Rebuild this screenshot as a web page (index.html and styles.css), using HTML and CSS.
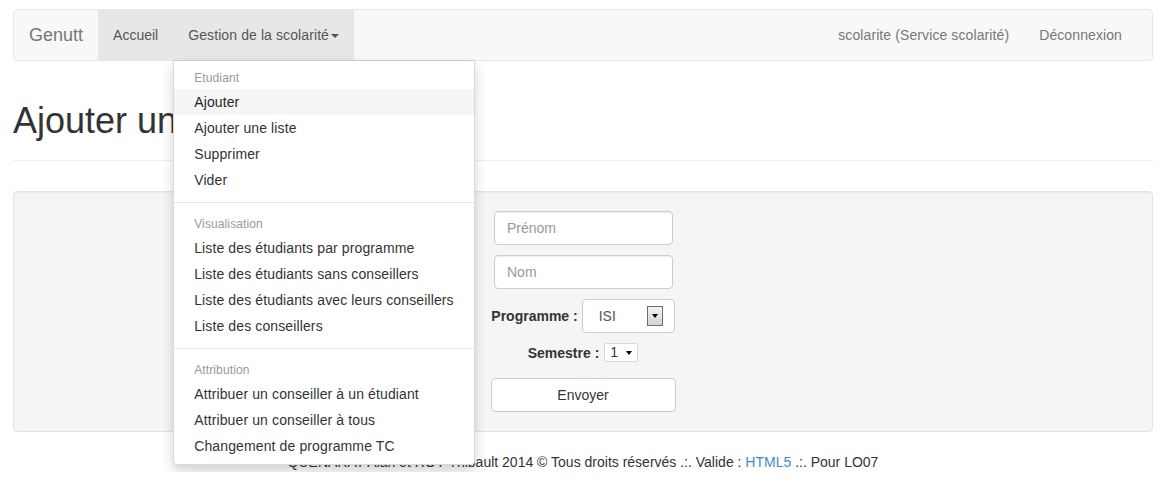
FILE: index.html
```html
<!DOCTYPE html>
<html lang="fr">
<head>
<meta charset="utf-8">
<title>Genutt - Ajouter un étudiant</title>
<link rel="stylesheet" href="styles.css">
</head>
<body>
<div class="page">
  <nav class="navbar">
    <div class="nav-left">
      <a class="brand" href="#">Genutt</a>
      <ul class="nav">
        <li class="active"><a href="#">Accueil</a></li>
        <li class="dropdown open">
          <a href="#">Gestion de la scolarité<span class="caret"></span></a>
          <ul class="dropdown-menu">
            <li class="dropdown-header">Etudiant</li>
            <li class="hover"><a href="#">Ajouter</a></li>
            <li><a href="#">Ajouter une liste</a></li>
            <li><a href="#">Supprimer</a></li>
            <li><a href="#">Vider</a></li>
            <li class="divider"></li>
            <li class="dropdown-header">Visualisation</li>
            <li><a href="#">Liste des étudiants par programme</a></li>
            <li><a href="#">Liste des étudiants sans conseillers</a></li>
            <li><a href="#">Liste des étudiants avec leurs conseillers</a></li>
            <li><a href="#">Liste des conseillers</a></li>
            <li class="divider"></li>
            <li class="dropdown-header">Attribution</li>
            <li><a href="#">Attribuer un conseiller à un étudiant</a></li>
            <li><a href="#">Attribuer un conseiller à tous</a></li>
            <li><a href="#">Changement de programme TC</a></li>
          </ul>
        </li>
      </ul>
    </div>
    <ul class="nav">
      <li><a href="#">scolarite (Service scolarité)</a></li>
      <li><a href="#">Déconnexion</a></li>
    </ul>
  </nav>

  <div class="page-header">
    <h1>Ajouter un étudiant</h1>
  </div>

  <div class="well">
    <form class="form">
      <input class="form-control" type="text" placeholder="Prénom">
      <input class="form-control" type="text" placeholder="Nom">
      <div class="row row-prog">
        <label class="lbl">Programme :</label>
        <span class="select-big">
          <select class="sel-inner"><option>ISI</option></select>
          <span class="win-arrow"><span class="tri"></span></span>
        </span>
      </div>
      <div class="row row-sem">
        <label class="lbl">Semestre :</label>
        <span class="select-small">
          <select class="sel-inner small"><option>1</option></select>
          <span class="tri"></span>
        </span>
      </div>
      <button class="btn" type="button">Envoyer</button>
    </form>
  </div>

  <footer class="footer">QUENARAT Alan et ROY Thibault 2014 © Tous droits réservés .:. Valide : <a href="#">HTML5</a> .:. Pour LO07</footer>
</div>
</body>
</html>
```

FILE: styles.css
```css
* { box-sizing: border-box; }

body {
  margin: 0;
  font-family: "Liberation Sans", Arial, Helvetica, sans-serif;
  font-size: 14px;
  line-height: 20px;
  color: #333;
  background: #fff;
}

a { text-decoration: none; }

.page {
  padding: 9px 10px 0 13px;
}

/* Navbar */
.navbar {
  display: flex;
  justify-content: space-between;
  height: 52px;
  background: #f8f8f8;
  border: 1px solid #e7e7e7;
  border-radius: 4px;
  padding-right: 15px;
  margin-bottom: 40px;
}

.nav-left {
  display: flex;
}

.brand {
  display: block;
  padding: 15px;
  font-size: 18px;
  line-height: 20px;
  color: #777;
}

.nav {
  display: flex;
  list-style: none;
  margin: 0;
  padding: 0;
  letter-spacing: 0.1px;
}

.nav > li {
  position: relative;
}

.nav > li > a {
  display: block;
  padding: 15px;
  line-height: 20px;
  color: #777;
}

.nav > li.active > a {
  letter-spacing: 0;
}

.nav > li.active > a,
.nav > li.open > a {
  background: #e7e7e7;
  color: #555;
}

.caret {
  display: inline-block;
  width: 0;
  height: 0;
  margin-left: 2px;
  vertical-align: middle;
  border-top: 4px solid #555;
  border-left: 4px solid transparent;
  border-right: 4px solid transparent;
}

.dropdown-menu {
  position: absolute;
  top: 100%;
  left: 0;
  z-index: 10;
  list-style: none;
  margin: 0;
  padding: 5px 0;
  background: #fff;
  border: 1px solid rgba(0, 0, 0, 0.15);
  border-top-color: #ccc;
  border-radius: 0 0 4px 4px;
  box-shadow: 0 6px 12px rgba(0, 0, 0, 0.175);
  white-space: nowrap;
  letter-spacing: 0.12px;
}

.dropdown-menu > li > a {
  display: block;
  padding: 3px 20px;
  line-height: 20px;
  color: #333;
}

.dropdown-menu > li.hover > a {
  background: #f5f5f5;
  color: #262626;
}

.dropdown-header {
  padding: 4px 20px 2px;
  font-size: 12px;
  line-height: 17px;
  color: #999;
}

.divider {
  height: 1px;
  margin: 9px 0;
  background: #e5e5e5;
}

/* Page header */
.page-header {
  padding-bottom: 9px;
  border-bottom: 1px solid #eee;
  margin-bottom: 30px;
}

.page-header h1 {
  margin: 0 0 10px;
  font-size: 36px;
  font-weight: 400;
  line-height: 1.1;
  color: #333;
}

/* Well */
.well {
  background: #f5f5f5;
  border: 1px solid #e3e3e3;
  border-radius: 4px;
  box-shadow: inset 0 1px 1px rgba(0, 0, 0, 0.05);
  padding: 19px;
  margin-bottom: 20px;
}

.form {
  display: flex;
  flex-direction: column;
  align-items: center;
}

.form-control {
  display: block;
  width: 179px;
  height: 34px;
  padding: 6px 12px;
  margin: 0 0 10px 1px;
  font-family: inherit;
  font-size: 14px;
  color: #555;
  background: #fff;
  border: 1px solid #ccc;
  border-radius: 4px;
  box-shadow: inset 0 1px 1px rgba(0, 0, 0, 0.075);
}

.form-control::placeholder {
  color: #999;
}

.row {
  display: flex;
  align-items: center;
}

.row-prog {
  gap: 4px;
  margin-bottom: 10px;
}

.row-sem {
  gap: 5px;
  margin-bottom: 15px;
  height: 20px;
}

.lbl {
  font-weight: 700;
  color: #333;
}

.select-big {
  display: flex;
  align-items: center;
  width: 93px;
  height: 34px;
  background: #fff;
  border: 1px solid #ccc;
  border-radius: 4px;
  padding: 0 11px 0 16px;
}

.sel-inner {
  appearance: none;
  -webkit-appearance: none;
  border: 0;
  background: transparent;
  padding: 0;
  margin: 0;
  font-family: inherit;
  font-size: 14px;
  color: #555;
  flex: 1;
  outline: none;
}

.win-arrow {
  display: flex;
  align-items: center;
  justify-content: center;
  width: 16px;
  height: 20px;
  border: 1px solid #707070;
  background: linear-gradient(#f2f2f2, #d4d4d4);
}

.tri {
  display: block;
  width: 0;
  height: 0;
  border-top: 4px solid #000;
  border-left: 3.5px solid transparent;
  border-right: 3.5px solid transparent;
}

.select-small {
  display: flex;
  align-items: center;
  width: 34px;
  height: 19px;
  background: #fff;
  border: 1px solid #d9d9d9;
  border-radius: 2px;
  padding: 0 5px 0 5px;
}

.sel-inner.small {
  color: #333;
  font-size: 14px;
  line-height: 17px;
}

.btn {
  width: 185px;
  height: 34px;
  padding: 6px 12px;
  font-family: inherit;
  font-size: 14px;
  color: #333;
  background: #fff;
  border: 1px solid #ccc;
  border-radius: 4px;
}

/* Footer */
.footer {
  text-align: center;
  line-height: 20px;
  color: #333;
}

.footer a {
  color: #428bca;
}
```
